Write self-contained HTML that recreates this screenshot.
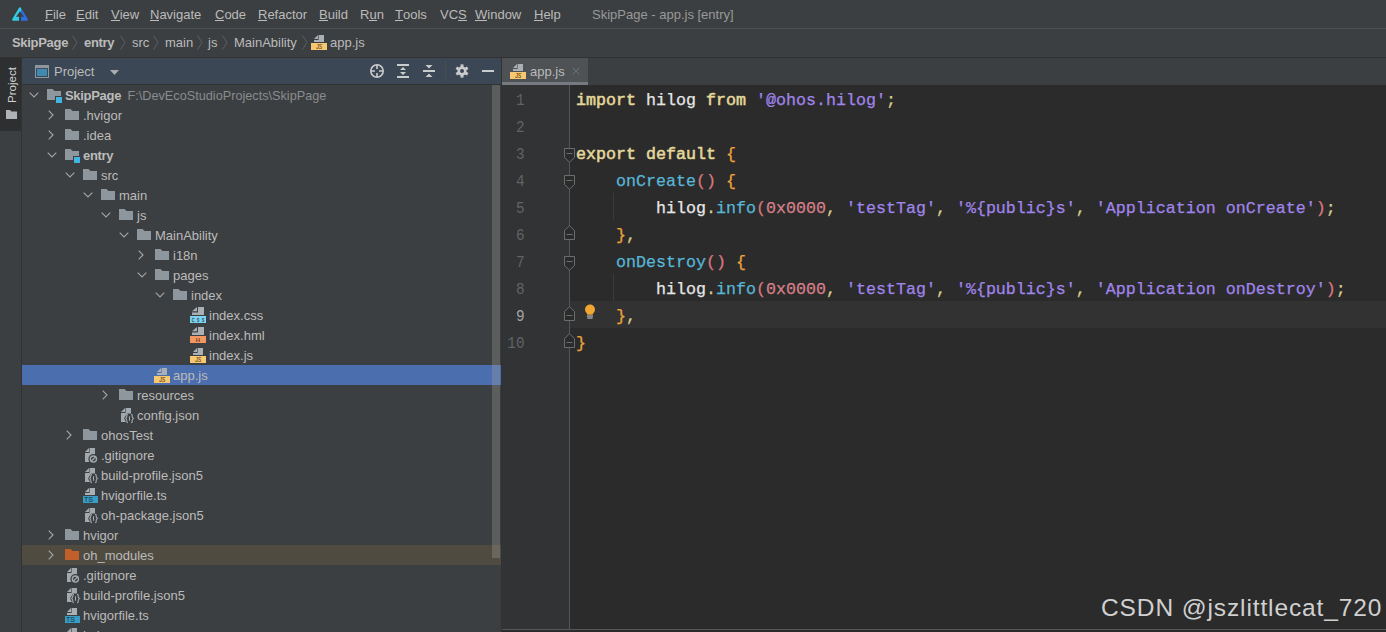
<!DOCTYPE html>
<html><head><meta charset="utf-8"><style>
*{margin:0;padding:0;box-sizing:border-box}
html,body{width:1386px;height:632px;overflow:hidden;background:#3c3f41;font-family:"Liberation Sans",sans-serif;font-size:13px;color:#bbbbbb}
.abs{position:absolute}
svg{position:absolute;overflow:visible}
.mi{position:absolute;top:7px;font-size:13px;color:#bbbbbb;white-space:nowrap;line-height:15px}
.mi u{text-decoration:none;position:relative}
.mi u:after{content:"";position:absolute;left:0;right:0;top:13px;height:1px;background:#bbbbbb}
.c{position:absolute;top:35px;font-size:13px;color:#bbbbbb;white-space:nowrap;line-height:15px}
.b{font-weight:bold;letter-spacing:-0.3px}
.row{position:absolute;left:22px;width:479px;height:20px;white-space:nowrap}
.t{position:absolute;top:3px;font-size:13px;line-height:15px;color:#bbbbbb;white-space:nowrap}
.ln{position:absolute;left:492px;width:32.5px;text-align:right;transform:scaleX(0.86);transform-origin:100% 0;height:27px;font-family:"Liberation Mono",monospace;font-size:16.66px;line-height:27px;color:#606366}
.cl{position:absolute;left:576px;height:27px;font-family:"Liberation Mono",monospace;font-size:16.66px;line-height:27px;white-space:pre;color:#e6e6e6;-webkit-text-stroke:0.25px currentColor}
.kw{color:#e3d89a;-webkit-text-stroke:0.55px currentColor}
.str{color:#a085ea}
.fn{color:#58b6d6}
.num{color:#d6808a}
.par{color:#d9767f}
.br{color:#eda33b}
.pu{color:#d8cc8a}
</style></head><body>
<div class="abs" style="left:0px;top:0px;width:1386px;height:28px;background:#3c3f41"></div>
<div class="abs" style="left:0px;top:28px;width:1386px;height:1px;background:#53514f"></div>
<div class="abs" style="left:0px;top:29px;width:1386px;height:28px;background:#3c3f41"></div>
<div class="abs" style="left:0px;top:57px;width:1386px;height:1px;background:#323232"></div>
<div class="abs" style="left:0px;top:58px;width:21px;height:574px;background:#3c3f41"></div>
<div class="abs" style="left:0px;top:58px;width:21px;height:73px;background:#2d2f30"></div>
<div class="abs" style="left:21px;top:58px;width:1px;height:574px;background:#323232"></div>
<div class="abs" style="left:22px;top:58px;width:479px;height:26px;background:#3c4755"></div>
<div class="abs" style="left:22px;top:84px;width:479px;height:1px;background:#323232"></div>
<div class="abs" style="left:22px;top:85px;width:479px;height:547px;background:#3c3f41"></div>
<div class="abs" style="left:501px;top:58px;width:1px;height:574px;background:#323232"></div>
<div class="abs" style="left:502px;top:58px;width:884px;height:27px;background:#3c3f41"></div>
<div class="abs" style="left:502px;top:85px;width:67px;height:544px;background:#313335"></div>
<div class="abs" style="left:569px;top:85px;width:1px;height:545px;background:#555555"></div>
<div class="abs" style="left:570px;top:85px;width:816px;height:544px;background:#2b2b2b"></div>
<div class="abs" style="left:502px;top:629px;width:884px;height:1px;background:#55585a"></div>
<div class="abs" style="left:502px;top:630px;width:884px;height:2px;background:#2b2b2b"></div>
<svg style="left:12px;top:7px" width="17" height="14" viewBox="0 0 17 14">
<defs><clipPath id="cl1"><path d="M-1 -1 H9.4 L8 15 H-1 Z"/></clipPath><clipPath id="cl2"><path d="M9.4 -1 H18 V15 H8 Z"/></clipPath></defs>
<g stroke-linejoin="round" stroke-width="2.2">
<path clip-path="url(#cl1)" d="M8 1.4 L14.8 12.6 L1.2 12.6 Z" fill="#32cde4" stroke="#32cde4"/>
<path clip-path="url(#cl2)" d="M8 1.4 L14.8 12.6 L1.2 12.6 Z" fill="#2f6fe2" stroke="#2f6fe2"/>
</g><path d="M8 4.3 L12 9.8 L4 9.8 Z" fill="#3c3f41"/><rect x="7" y="9" width="2" height="6" fill="#3c3f41"/></svg>
<span class="mi" style="left:45px"><u>F</u>ile</span>
<span class="mi" style="left:76px"><u>E</u>dit</span>
<span class="mi" style="left:111px"><u>V</u>iew</span>
<span class="mi" style="left:150px"><u>N</u>avigate</span>
<span class="mi" style="left:215px"><u>C</u>ode</span>
<span class="mi" style="left:258px"><u>R</u>efactor</span>
<span class="mi" style="left:319px"><u>B</u>uild</span>
<span class="mi" style="left:360px">R<u>u</u>n</span>
<span class="mi" style="left:395px"><u>T</u>ools</span>
<span class="mi" style="left:440px">VC<u>S</u></span>
<span class="mi" style="left:475px"><u>W</u>indow</span>
<span class="mi" style="left:534px"><u>H</u>elp</span>
<span class="mi" style="left:592px;color:#999999">SkipPage - app.js [entry]</span>
<span class="c b" style="left:12px">SkipPage</span>
<span class="c b" style="left:84px">entry</span>
<span class="c" style="left:132px">src</span>
<span class="c" style="left:165px">main</span>
<span class="c" style="left:208px">js</span>
<span class="c" style="left:234px">MainAbility</span>
<span class="c" style="left:330px">app.js</span>
<svg style="left:72px;top:35px" width="6" height="15" viewBox="0 0 6 15"><path d="M0.5 0.5 L5 7.5 L0.5 14.5" fill="none" stroke="#5d6063" stroke-width="1"/></svg>
<svg style="left:120px;top:35px" width="6" height="15" viewBox="0 0 6 15"><path d="M0.5 0.5 L5 7.5 L0.5 14.5" fill="none" stroke="#5d6063" stroke-width="1"/></svg>
<svg style="left:153px;top:35px" width="6" height="15" viewBox="0 0 6 15"><path d="M0.5 0.5 L5 7.5 L0.5 14.5" fill="none" stroke="#5d6063" stroke-width="1"/></svg>
<svg style="left:197px;top:35px" width="6" height="15" viewBox="0 0 6 15"><path d="M0.5 0.5 L5 7.5 L0.5 14.5" fill="none" stroke="#5d6063" stroke-width="1"/></svg>
<svg style="left:222px;top:35px" width="6" height="15" viewBox="0 0 6 15"><path d="M0.5 0.5 L5 7.5 L0.5 14.5" fill="none" stroke="#5d6063" stroke-width="1"/></svg>
<svg style="left:302px;top:35px" width="6" height="15" viewBox="0 0 6 15"><path d="M0.5 0.5 L5 7.5 L0.5 14.5" fill="none" stroke="#5d6063" stroke-width="1"/></svg>
<svg style="left:311px;top:34px" width="16" height="16" viewBox="0 0 16 16"><path d="M7.6 1 H13 V8 H3 V6 H7.6 Z" fill="#a9b0b5"/><path d="M3 5 L7 1 V5 Z" fill="#a9b0b5"/><rect x="0" y="9" width="16" height="7" fill="#f7c872"/><g transform="translate(8.2 0) scale(0.78 1)"><text x="0" y="15" text-anchor="middle" font-family="Liberation Sans" font-size="6.6" font-style="italic" fill="#6a4818" stroke="#6a4818" stroke-width="0.15">JS</text></g></svg>
<span class="abs" style="left:-7px;top:78px;transform:rotate(-90deg);font-size:11.5px;line-height:14px;color:#d2d2d2;white-space:nowrap;width:37px;text-align:center">Project</span>
<svg style="left:6px;top:110px" width="11" height="9" viewBox="0 0 11 9"><path d="M0 0 H4 L5.5 1.5 H11 V9 H0 Z" fill="#aeb3b7"/></svg>
<svg style="left:35px;top:65px" width="14" height="13" viewBox="0 0 14 13"><rect x="0.5" y="0.5" width="13" height="12" fill="none" stroke="#8f969c"/><rect x="0.5" y="0.5" width="13" height="2.6" fill="#8f969c"/><rect x="2" y="4" width="10" height="7" fill="#3e8ab2"/></svg>
<span class="abs" style="left:54px;top:64px;font-size:13px;line-height:15px;color:#bbbbbb">Project</span>
<svg style="left:110px;top:70px" width="9" height="5" viewBox="0 0 9 5"><path d="M0 0 H9 L4.5 5 Z" fill="#a9adb0"/></svg>
<svg style="left:369px;top:63px" width="16" height="16" viewBox="0 0 16 16"><circle cx="8" cy="8" r="6.2" fill="none" stroke="#c9cbcd" stroke-width="1.6"/><path d="M8 2 V6 M8 10 V14 M2 8 H6 M10 8 H14" stroke="#c9cbcd" stroke-width="1.6"/></svg>
<svg style="left:396px;top:63px" width="14" height="16" viewBox="0 0 14 16"><rect x="1" y="1" width="12" height="2" fill="#c9cbcd"/><rect x="1" y="13" width="12" height="2" fill="#c9cbcd"/><path d="M4 7 L7 4 L10 7 Z M4 9 L7 12 L10 9 Z" fill="#c9cbcd"/></svg>
<svg style="left:422px;top:63px" width="14" height="16" viewBox="0 0 14 16"><rect x="1" y="7" width="12" height="2" fill="#c9cbcd"/><path d="M3.5 2 H10.5 L7 5.5 Z M3.5 14 H10.5 L7 10.5 Z" fill="#c9cbcd"/></svg>
<div class="abs" style="left:445px;top:61px;width:1px;height:20px;background:#4a4d50"></div>
<svg style="left:454px;top:63px" width="16" height="16" viewBox="0 0 16 16"><g fill="#c9cbcd"><circle cx="8" cy="8" r="4.6"/><rect x="6.5" y="1.4" width="3" height="3.2" transform="rotate(0 8 8)"/><rect x="6.5" y="1.4" width="3" height="3.2" transform="rotate(60 8 8)"/><rect x="6.5" y="1.4" width="3" height="3.2" transform="rotate(120 8 8)"/><rect x="6.5" y="1.4" width="3" height="3.2" transform="rotate(180 8 8)"/><rect x="6.5" y="1.4" width="3" height="3.2" transform="rotate(240 8 8)"/><rect x="6.5" y="1.4" width="3" height="3.2" transform="rotate(300 8 8)"/></g><circle cx="8" cy="8" r="2" fill="#3c4755"/></svg>
<div class="abs" style="left:482px;top:70px;width:12px;height:2px;background:#c9cbcd"></div>
<svg style="left:29px;top:92px" width="10" height="6" viewBox="0 0 10 6"><path d="M0.7 0.7 L5 5 L9.3 0.7" fill="none" stroke="#a3a6a9" stroke-width="1.1"/></svg>
<svg style="left:46px;top:87px" width="16" height="16" viewBox="0 0 16 16"><path d="M1 2 H6.5 L8.5 4 H15 V13 H1 Z" fill="#8e979d"/><rect x="9" y="9" width="8" height="8" fill="#3c3f41"/><rect x="10" y="10" width="6" height="6" fill="#40b6e0"/></svg>
<span class="t b" style="left:65px;top:88px">SkipPage</span>
<span class="t" style="left:127.5px;top:89px;color:#8a8c8e;font-size:12.7px">F:\DevEcoStudioProjects\SkipPage</span>
<svg style="left:48px;top:110px" width="6" height="10" viewBox="0 0 6 10"><path d="M0.7 0.7 L5 5 L0.7 9.3" fill="none" stroke="#a3a6a9" stroke-width="1.1"/></svg>
<svg style="left:64px;top:107px" width="16" height="16" viewBox="0 0 16 16"><path d="M1 2 H6.5 L8.5 4 H15 V13 H1 Z" fill="#8e979d"/></svg>
<span class="t" style="left:83px;top:108px">.hvigor</span>
<svg style="left:48px;top:130px" width="6" height="10" viewBox="0 0 6 10"><path d="M0.7 0.7 L5 5 L0.7 9.3" fill="none" stroke="#a3a6a9" stroke-width="1.1"/></svg>
<svg style="left:64px;top:127px" width="16" height="16" viewBox="0 0 16 16"><path d="M1 2 H6.5 L8.5 4 H15 V13 H1 Z" fill="#8e979d"/></svg>
<span class="t" style="left:83px;top:128px">.idea</span>
<svg style="left:47px;top:152px" width="10" height="6" viewBox="0 0 10 6"><path d="M0.7 0.7 L5 5 L9.3 0.7" fill="none" stroke="#a3a6a9" stroke-width="1.1"/></svg>
<svg style="left:64px;top:147px" width="16" height="16" viewBox="0 0 16 16"><path d="M1 2 H6.5 L8.5 4 H15 V13 H1 Z" fill="#8e979d"/><rect x="9" y="9" width="8" height="8" fill="#3c3f41"/><rect x="10" y="10" width="6" height="6" fill="#40b6e0"/></svg>
<span class="t b" style="left:83px;top:148px">entry</span>
<svg style="left:65px;top:172px" width="10" height="6" viewBox="0 0 10 6"><path d="M0.7 0.7 L5 5 L9.3 0.7" fill="none" stroke="#a3a6a9" stroke-width="1.1"/></svg>
<svg style="left:82px;top:167px" width="16" height="16" viewBox="0 0 16 16"><path d="M1 2 H6.5 L8.5 4 H15 V13 H1 Z" fill="#8e979d"/></svg>
<span class="t" style="left:101px;top:168px">src</span>
<svg style="left:83px;top:192px" width="10" height="6" viewBox="0 0 10 6"><path d="M0.7 0.7 L5 5 L9.3 0.7" fill="none" stroke="#a3a6a9" stroke-width="1.1"/></svg>
<svg style="left:100px;top:187px" width="16" height="16" viewBox="0 0 16 16"><path d="M1 2 H6.5 L8.5 4 H15 V13 H1 Z" fill="#8e979d"/></svg>
<span class="t" style="left:119px;top:188px">main</span>
<svg style="left:101px;top:212px" width="10" height="6" viewBox="0 0 10 6"><path d="M0.7 0.7 L5 5 L9.3 0.7" fill="none" stroke="#a3a6a9" stroke-width="1.1"/></svg>
<svg style="left:118px;top:207px" width="16" height="16" viewBox="0 0 16 16"><path d="M1 2 H6.5 L8.5 4 H15 V13 H1 Z" fill="#8e979d"/></svg>
<span class="t" style="left:137px;top:208px">js</span>
<svg style="left:119px;top:232px" width="10" height="6" viewBox="0 0 10 6"><path d="M0.7 0.7 L5 5 L9.3 0.7" fill="none" stroke="#a3a6a9" stroke-width="1.1"/></svg>
<svg style="left:136px;top:227px" width="16" height="16" viewBox="0 0 16 16"><path d="M1 2 H6.5 L8.5 4 H15 V13 H1 Z" fill="#8e979d"/></svg>
<span class="t" style="left:155px;top:228px">MainAbility</span>
<svg style="left:138px;top:250px" width="6" height="10" viewBox="0 0 6 10"><path d="M0.7 0.7 L5 5 L0.7 9.3" fill="none" stroke="#a3a6a9" stroke-width="1.1"/></svg>
<svg style="left:154px;top:247px" width="16" height="16" viewBox="0 0 16 16"><path d="M1 2 H6.5 L8.5 4 H15 V13 H1 Z" fill="#8e979d"/></svg>
<span class="t" style="left:173px;top:248px">i18n</span>
<svg style="left:137px;top:272px" width="10" height="6" viewBox="0 0 10 6"><path d="M0.7 0.7 L5 5 L9.3 0.7" fill="none" stroke="#a3a6a9" stroke-width="1.1"/></svg>
<svg style="left:154px;top:267px" width="16" height="16" viewBox="0 0 16 16"><path d="M1 2 H6.5 L8.5 4 H15 V13 H1 Z" fill="#8e979d"/></svg>
<span class="t" style="left:173px;top:268px">pages</span>
<svg style="left:155px;top:292px" width="10" height="6" viewBox="0 0 10 6"><path d="M0.7 0.7 L5 5 L9.3 0.7" fill="none" stroke="#a3a6a9" stroke-width="1.1"/></svg>
<svg style="left:172px;top:287px" width="16" height="16" viewBox="0 0 16 16"><path d="M1 2 H6.5 L8.5 4 H15 V13 H1 Z" fill="#8e979d"/></svg>
<span class="t" style="left:191px;top:288px">index</span>
<svg style="left:190px;top:307px" width="16" height="16" viewBox="0 0 16 16"><path d="M8 0 H14 V8 H2 V5.5 H8 Z" fill="#a9b0b5"/><path d="M2 4.3 L7 0 V4.3 Z" fill="#a9b0b5"/><rect x="0" y="9" width="16" height="7" fill="#7dd3f3"/><g transform="translate(3.1 0) scale(0.62 1)"><text x="0" y="14.7" text-anchor="middle" font-family="Liberation Sans" font-size="6" fill="#3a5d6c" stroke="#3a5d6c" stroke-width="0.35">C</text></g><g transform="translate(8.1 0) scale(0.62 1)"><text x="0" y="14.7" text-anchor="middle" font-family="Liberation Sans" font-size="6" fill="#3a5d6c" stroke="#3a5d6c" stroke-width="0.35">S</text></g><g transform="translate(12.9 0) scale(0.62 1)"><text x="0" y="14.7" text-anchor="middle" font-family="Liberation Sans" font-size="6" fill="#3a5d6c" stroke="#3a5d6c" stroke-width="0.35">S</text></g></svg>
<span class="t" style="left:209px;top:308px">index.css</span>
<svg style="left:190px;top:327px" width="16" height="16" viewBox="0 0 16 16"><path d="M8 0 H14 V8 H2 V5.5 H8 Z" fill="#a9b0b5"/><path d="M2 4.3 L7 0 V4.3 Z" fill="#a9b0b5"/><rect x="0" y="9" width="16" height="7" fill="#f39762"/><text x="8" y="14.7" text-anchor="middle" font-family="Liberation Sans" font-size="6" font-weight="bold" fill="#7a4226">H</text></svg>
<span class="t" style="left:209px;top:328px">index.hml</span>
<svg style="left:190px;top:347px" width="16" height="16" viewBox="0 0 16 16"><path d="M7.6 1 H13 V8 H3 V6 H7.6 Z" fill="#a9b0b5"/><path d="M3 5 L7 1 V5 Z" fill="#a9b0b5"/><rect x="0" y="9" width="16" height="7" fill="#f7c872"/><g transform="translate(8.2 0) scale(0.78 1)"><text x="0" y="15" text-anchor="middle" font-family="Liberation Sans" font-size="6.6" font-style="italic" fill="#6a4818" stroke="#6a4818" stroke-width="0.15">JS</text></g></svg>
<span class="t" style="left:209px;top:348px">index.js</span>
<div class="abs" style="left:22px;top:365px;width:479px;height:20px;background:#4b6eaf"></div>
<svg style="left:154px;top:367px" width="16" height="16" viewBox="0 0 16 16"><path d="M7.6 1 H13 V8 H3 V6 H7.6 Z" fill="#a9b0b5"/><path d="M3 5 L7 1 V5 Z" fill="#a9b0b5"/><rect x="0" y="9" width="16" height="7" fill="#f7c872"/><g transform="translate(8.2 0) scale(0.78 1)"><text x="0" y="15" text-anchor="middle" font-family="Liberation Sans" font-size="6.6" font-style="italic" fill="#6a4818" stroke="#6a4818" stroke-width="0.15">JS</text></g></svg>
<span class="t" style="left:173px;top:368px">app.js</span>
<svg style="left:102px;top:390px" width="6" height="10" viewBox="0 0 6 10"><path d="M0.7 0.7 L5 5 L0.7 9.3" fill="none" stroke="#a3a6a9" stroke-width="1.1"/></svg>
<svg style="left:118px;top:387px" width="16" height="16" viewBox="0 0 16 16"><path d="M1 2 H6.5 L8.5 4 H15 V13 H1 Z" fill="#8e979d"/></svg>
<span class="t" style="left:137px;top:388px">resources</span>
<svg style="left:118px;top:407px" width="16" height="16" viewBox="0 0 16 16"><path d="M7.6 1 H13 V15 H3 V6 H7.6 Z" fill="#a2aab0"/><path d="M3 5 L7 1 V5 Z" fill="#a2aab0"/><path d="M6 11.5 L9 6.5 H14 L17 11.5 L14 16.8 H9 Z" fill="#3c3f41"/><path d="M10 7.3 C8.5 7.3 8.8 8.8 8.8 9.8 C8.8 10.9 7.8 11.5 6.8 11.5 C7.8 11.5 8.8 12.1 8.8 13.2 C8.8 14.2 8.5 15.8 10 15.8 M13 7.3 C14.5 7.3 14.2 8.8 14.2 9.8 C14.2 10.9 15.2 11.5 16.2 11.5 C15.2 11.5 14.2 12.1 14.2 13.2 C14.2 14.2 14.5 15.8 13 15.8 M11.5 9.3 V13.7" fill="none" stroke="#a2aab0" stroke-width="1.1"/></svg>
<span class="t" style="left:137px;top:408px">config.json</span>
<svg style="left:66px;top:430px" width="6" height="10" viewBox="0 0 6 10"><path d="M0.7 0.7 L5 5 L0.7 9.3" fill="none" stroke="#a3a6a9" stroke-width="1.1"/></svg>
<svg style="left:82px;top:427px" width="16" height="16" viewBox="0 0 16 16"><path d="M1 2 H6.5 L8.5 4 H15 V13 H1 Z" fill="#8e979d"/></svg>
<span class="t" style="left:101px;top:428px">ohosTest</span>
<svg style="left:82px;top:447px" width="16" height="16" viewBox="0 0 16 16"><path d="M7.6 1 H13 V15 H3 V6 H7.6 Z" fill="#a2aab0"/><path d="M3 5 L7 1 V5 Z" fill="#a2aab0"/><circle cx="11.4" cy="12.1" r="5" fill="#3c3f41"/><circle cx="11.4" cy="12.1" r="3.1" fill="none" stroke="#a2aab0" stroke-width="1.3"/><path d="M9.2 14.3 L13.6 9.9" stroke="#a2aab0" stroke-width="1.3"/></svg>
<span class="t" style="left:101px;top:448px">.gitignore</span>
<svg style="left:82px;top:467px" width="16" height="16" viewBox="0 0 16 16"><path d="M7.6 1 H13 V15 H3 V6 H7.6 Z" fill="#a2aab0"/><path d="M3 5 L7 1 V5 Z" fill="#a2aab0"/><path d="M6 11.5 L9 6.5 H14 L17 11.5 L14 16.8 H9 Z" fill="#3c3f41"/><path d="M10 7.3 C8.5 7.3 8.8 8.8 8.8 9.8 C8.8 10.9 7.8 11.5 6.8 11.5 C7.8 11.5 8.8 12.1 8.8 13.2 C8.8 14.2 8.5 15.8 10 15.8 M13 7.3 C14.5 7.3 14.2 8.8 14.2 9.8 C14.2 10.9 15.2 11.5 16.2 11.5 C15.2 11.5 14.2 12.1 14.2 13.2 C14.2 14.2 14.5 15.8 13 15.8 M11.5 9.3 V13.7" fill="none" stroke="#a2aab0" stroke-width="1.1"/></svg>
<span class="t" style="left:101px;top:468px">build-profile.json5</span>
<svg style="left:82px;top:487px" width="16" height="16" viewBox="0 0 16 16"><path d="M7.6 1 H13 V8 H3 V6 H7.6 Z" fill="#a9b0b5"/><path d="M3 5 L7 1 V5 Z" fill="#a9b0b5"/><rect x="1" y="9" width="15" height="7" fill="#3a9cc2"/><text x="6.5" y="15.3" text-anchor="middle" font-family="Liberation Sans" font-size="7" fill="#16313f">TS</text></svg>
<span class="t" style="left:101px;top:488px">hvigorfile.ts</span>
<svg style="left:82px;top:507px" width="16" height="16" viewBox="0 0 16 16"><path d="M7.6 1 H13 V15 H3 V6 H7.6 Z" fill="#a2aab0"/><path d="M3 5 L7 1 V5 Z" fill="#a2aab0"/><path d="M6 11.5 L9 6.5 H14 L17 11.5 L14 16.8 H9 Z" fill="#3c3f41"/><path d="M10 7.3 C8.5 7.3 8.8 8.8 8.8 9.8 C8.8 10.9 7.8 11.5 6.8 11.5 C7.8 11.5 8.8 12.1 8.8 13.2 C8.8 14.2 8.5 15.8 10 15.8 M13 7.3 C14.5 7.3 14.2 8.8 14.2 9.8 C14.2 10.9 15.2 11.5 16.2 11.5 C15.2 11.5 14.2 12.1 14.2 13.2 C14.2 14.2 14.5 15.8 13 15.8 M11.5 9.3 V13.7" fill="none" stroke="#a2aab0" stroke-width="1.1"/></svg>
<span class="t" style="left:101px;top:508px">oh-package.json5</span>
<svg style="left:48px;top:530px" width="6" height="10" viewBox="0 0 6 10"><path d="M0.7 0.7 L5 5 L0.7 9.3" fill="none" stroke="#a3a6a9" stroke-width="1.1"/></svg>
<svg style="left:64px;top:527px" width="16" height="16" viewBox="0 0 16 16"><path d="M1 2 H6.5 L8.5 4 H15 V13 H1 Z" fill="#8e979d"/></svg>
<span class="t" style="left:83px;top:528px">hvigor</span>
<div class="abs" style="left:22px;top:545px;width:479px;height:20px;background:#4f4b41"></div>
<svg style="left:48px;top:550px" width="6" height="10" viewBox="0 0 6 10"><path d="M0.7 0.7 L5 5 L0.7 9.3" fill="none" stroke="#a3a6a9" stroke-width="1.1"/></svg>
<svg style="left:64px;top:547px" width="16" height="16" viewBox="0 0 16 16"><path d="M1 2 H6.5 L8.5 4 H15 V13 H1 Z" fill="#c1602a"/></svg>
<span class="t" style="left:83px;top:548px">oh_modules</span>
<svg style="left:64px;top:567px" width="16" height="16" viewBox="0 0 16 16"><path d="M7.6 1 H13 V15 H3 V6 H7.6 Z" fill="#a2aab0"/><path d="M3 5 L7 1 V5 Z" fill="#a2aab0"/><circle cx="11.4" cy="12.1" r="5" fill="#3c3f41"/><circle cx="11.4" cy="12.1" r="3.1" fill="none" stroke="#a2aab0" stroke-width="1.3"/><path d="M9.2 14.3 L13.6 9.9" stroke="#a2aab0" stroke-width="1.3"/></svg>
<span class="t" style="left:83px;top:568px">.gitignore</span>
<svg style="left:64px;top:587px" width="16" height="16" viewBox="0 0 16 16"><path d="M7.6 1 H13 V15 H3 V6 H7.6 Z" fill="#a2aab0"/><path d="M3 5 L7 1 V5 Z" fill="#a2aab0"/><path d="M6 11.5 L9 6.5 H14 L17 11.5 L14 16.8 H9 Z" fill="#3c3f41"/><path d="M10 7.3 C8.5 7.3 8.8 8.8 8.8 9.8 C8.8 10.9 7.8 11.5 6.8 11.5 C7.8 11.5 8.8 12.1 8.8 13.2 C8.8 14.2 8.5 15.8 10 15.8 M13 7.3 C14.5 7.3 14.2 8.8 14.2 9.8 C14.2 10.9 15.2 11.5 16.2 11.5 C15.2 11.5 14.2 12.1 14.2 13.2 C14.2 14.2 14.5 15.8 13 15.8 M11.5 9.3 V13.7" fill="none" stroke="#a2aab0" stroke-width="1.1"/></svg>
<span class="t" style="left:83px;top:588px">build-profile.json5</span>
<svg style="left:64px;top:607px" width="16" height="16" viewBox="0 0 16 16"><path d="M7.6 1 H13 V8 H3 V6 H7.6 Z" fill="#a9b0b5"/><path d="M3 5 L7 1 V5 Z" fill="#a9b0b5"/><rect x="1" y="9" width="15" height="7" fill="#3a9cc2"/><text x="6.5" y="15.3" text-anchor="middle" font-family="Liberation Sans" font-size="7" fill="#16313f">TS</text></svg>
<span class="t" style="left:83px;top:608px">hvigorfile.ts</span>
<svg style="left:64px;top:627px" width="16" height="16" viewBox="0 0 16 16"><path d="M7.6 1 H13 V15 H3 V6 H7.6 Z" fill="#a2aab0"/><path d="M3 5 L7 1 V5 Z" fill="#a2aab0"/></svg>
<span class="t" style="left:83px;top:628px">hvigorw</span>
<div class="abs" style="left:492px;top:85px;width:8px;height:473px;background:rgba(170,165,160,0.3)"></div>
<div class="abs" style="left:502px;top:58px;width:86px;height:24px;background:#4e5254"></div>
<div class="abs" style="left:502px;top:82px;width:86px;height:3px;background:#747a80"></div>
<svg style="left:510px;top:63px" width="16" height="16" viewBox="0 0 16 16"><path d="M7.6 1 H13 V8 H3 V6 H7.6 Z" fill="#a9b0b5"/><path d="M3 5 L7 1 V5 Z" fill="#a9b0b5"/><rect x="0" y="9" width="16" height="7" fill="#f7c872"/><g transform="translate(8.2 0) scale(0.78 1)"><text x="0" y="15" text-anchor="middle" font-family="Liberation Sans" font-size="6.6" font-style="italic" fill="#6a4818" stroke="#6a4818" stroke-width="0.15">JS</text></g></svg>
<span class="abs" style="left:530px;top:64px;font-size:13px;line-height:15px;color:#bbbbbb">app.js</span>
<svg style="left:572px;top:67px" width="8" height="8" viewBox="0 0 8 8"><path d="M0.5 0.5 L7.5 7.5 M7.5 0.5 L0.5 7.5" stroke="#6e7173" stroke-width="1"/></svg>
<div class="abs" style="left:570px;top:301px;width:816px;height:27px;background:#323232"></div>
<div class="abs" style="left:613px;top:193px;width:1px;height:27px;background:#3b3b3b"></div>
<div class="abs" style="left:613px;top:274px;width:1px;height:27px;background:#3b3b3b"></div>
<div class="ln" style="top:87px;color:#606366">1</div>
<div class="cl" style="top:87px"><span class="kw">import</span> hilog <span class="kw">from</span> <span class="str">'@ohos.hilog'</span><span class="pu">;</span></div>
<div class="ln" style="top:114px;color:#606366">2</div>
<div class="cl" style="top:114px"></div>
<div class="ln" style="top:141px;color:#606366">3</div>
<div class="cl" style="top:141px"><span class="kw">export</span> <span class="kw">default</span> <span class="br">{</span></div>
<div class="ln" style="top:168px;color:#606366">4</div>
<div class="cl" style="top:168px">    <span class="fn">onCreate</span><span class="par">()</span> <span class="br">{</span></div>
<div class="ln" style="top:195px;color:#606366">5</div>
<div class="cl" style="top:195px">        hilog<span class="pu">.</span><span class="fn">info</span><span class="par">(</span><span class="num">0x0000</span><span class="pu">,</span> <span class="str">'testTag'</span><span class="pu">,</span> <span class="str">'%{public}s'</span><span class="pu">,</span> <span class="str">'Application onCreate'</span><span class="par">)</span><span class="pu">;</span></div>
<div class="ln" style="top:222px;color:#606366">6</div>
<div class="cl" style="top:222px">    <span class="br">}</span><span class="pu">,</span></div>
<div class="ln" style="top:249px;color:#606366">7</div>
<div class="cl" style="top:249px">    <span class="fn">onDestroy</span><span class="par">()</span> <span class="br">{</span></div>
<div class="ln" style="top:276px;color:#606366">8</div>
<div class="cl" style="top:276px">        hilog<span class="pu">.</span><span class="fn">info</span><span class="par">(</span><span class="num">0x0000</span><span class="pu">,</span> <span class="str">'testTag'</span><span class="pu">,</span> <span class="str">'%{public}s'</span><span class="pu">,</span> <span class="str">'Application onDestroy'</span><span class="par">)</span><span class="pu">;</span></div>
<div class="ln" style="top:303px;color:#a4a3a3">9</div>
<div class="cl" style="top:303px">    <span class="br">}</span><span class="pu">,</span></div>
<div class="ln" style="top:330px;color:#606366">10</div>
<div class="cl" style="top:330px"><span class="br">}</span></div>
<svg style="left:563px;top:147.5px" width="13" height="16" viewBox="0 0 13 16"><path d="M1.5 0.5 H11.5 V9.5 L6.5 14.2 L1.5 9.5 Z" fill="#2b2b2b" stroke="#6a6c6e" stroke-width="1"/><path d="M3.5 5.5 H9.5" stroke="#6a6c6e" stroke-width="1"/></svg>
<svg style="left:563px;top:174.5px" width="13" height="16" viewBox="0 0 13 16"><path d="M1.5 0.5 H11.5 V9.5 L6.5 14.2 L1.5 9.5 Z" fill="#2b2b2b" stroke="#6a6c6e" stroke-width="1"/><path d="M3.5 5.5 H9.5" stroke="#6a6c6e" stroke-width="1"/></svg>
<svg style="left:563px;top:255.5px" width="13" height="16" viewBox="0 0 13 16"><path d="M1.5 0.5 H11.5 V9.5 L6.5 14.2 L1.5 9.5 Z" fill="#2b2b2b" stroke="#6a6c6e" stroke-width="1"/><path d="M3.5 5.5 H9.5" stroke="#6a6c6e" stroke-width="1"/></svg>
<svg style="left:563px;top:225px" width="13" height="16" viewBox="0 0 13 16"><path d="M1.5 14.5 H11.5 V5.5 L6.5 0.8 L1.5 5.5 Z" fill="#2b2b2b" stroke="#6a6c6e" stroke-width="1"/><path d="M3.5 9.5 H9.5" stroke="#6a6c6e" stroke-width="1"/></svg>
<svg style="left:563px;top:306px" width="13" height="16" viewBox="0 0 13 16"><path d="M1.5 14.5 H11.5 V5.5 L6.5 0.8 L1.5 5.5 Z" fill="#2b2b2b" stroke="#6a6c6e" stroke-width="1"/><path d="M3.5 9.5 H9.5" stroke="#6a6c6e" stroke-width="1"/></svg>
<svg style="left:563px;top:333px" width="13" height="16" viewBox="0 0 13 16"><path d="M1.5 14.5 H11.5 V5.5 L6.5 0.8 L1.5 5.5 Z" fill="#2b2b2b" stroke="#6a6c6e" stroke-width="1"/><path d="M3.5 9.5 H9.5" stroke="#6a6c6e" stroke-width="1"/></svg>
<svg style="left:584px;top:303.7px" width="12" height="16" viewBox="0 0 12 16"><path d="M6 0.5 A5 5 0 0 1 11 5.5 C11 8 9 9 8.5 10.8 H3.5 C3 9 1 8 1 5.5 A5 5 0 0 1 6 0.5 Z" fill="#f0a732"/><rect x="2.9" y="11.5" width="6.1" height="1.1" fill="#c8c8c8"/><rect x="3.3" y="13.5" width="5.3" height="1.1" fill="#c8c8c8"/></svg>
<span class="abs" style="left:1101px;top:594px;font-size:24.5px;line-height:28px;color:#d0d0d0;white-space:nowrap;letter-spacing:0.89px">CSDN @jszlittlecat_720</span>
</body></html>
